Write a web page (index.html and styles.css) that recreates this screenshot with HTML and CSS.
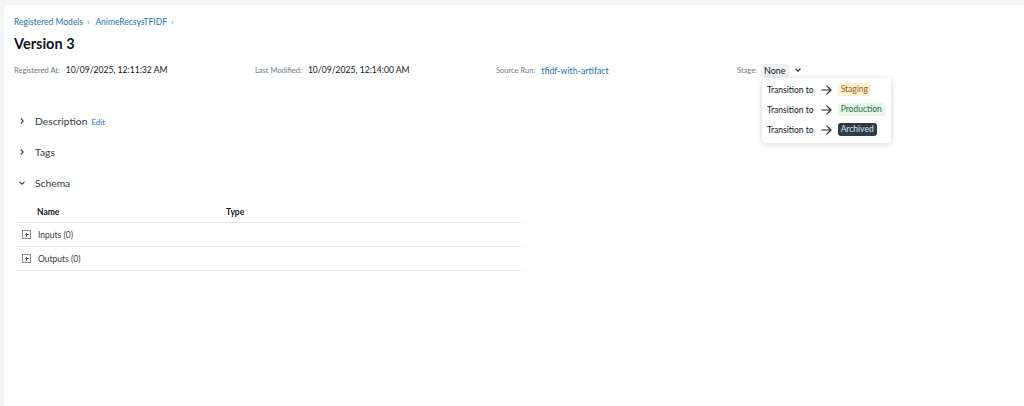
FILE: index.html
```html
<!DOCTYPE html>
<html lang="en">
<head>
  <meta charset="UTF-8" />
  <title>Version 3 - AnimeRecsysTFIDF</title>
  <link rel="stylesheet" href="styles.css">
</head>
<body>
  <div class="page">
    <nav class="breadcrumb">
      <a href="#">Registered Models</a><span class="sep">›</span>
      <a href="#">AnimeRecsysTFIDF</a><span class="sep">›</span>
    </nav>
    <h1>Version 3</h1>

    <div class="meta">
      <div class="meta-item"><span class="label">Registered At:</span><span class="value">10/09/2025, 12:11:32 AM</span></div>
      <div class="meta-item"><span class="label">Last Modified:</span><span class="value">10/09/2025, 12:14:00 AM</span></div>
      <div class="meta-item"><span class="label">Source Run:</span><a class="value link" href="#">tfidf-with-artifact</a></div>
      <div class="meta-item stage">
        <span class="label">Stage:</span>
        <span class="stage-value">None</span>
        <svg class="caret" width="8" height="8" viewBox="0 0 8 8"><path d="M1.5 2.8 L4 5.2 L6.5 2.8" fill="none" stroke="#333" stroke-width="1.2"/></svg>
        <div class="menu">
          <div class="menu-item">Transition to <svg class="arrow" width="11" height="10" viewBox="0 0 11 10"><path d="M0.5 5 H10 M5.5 0.7 L10 5 L5.5 9.3" fill="none" stroke="#222" stroke-width="1.1"/></svg><span class="badge staging">Staging</span></div>
          <div class="menu-item">Transition to <svg class="arrow" width="11" height="10" viewBox="0 0 11 10"><path d="M0.5 5 H10 M5.5 0.7 L10 5 L5.5 9.3" fill="none" stroke="#222" stroke-width="1.1"/></svg><span class="badge production">Production</span></div>
          <div class="menu-item">Transition to <svg class="arrow" width="11" height="10" viewBox="0 0 11 10"><path d="M0.5 5 H10 M5.5 0.7 L10 5 L5.5 9.3" fill="none" stroke="#222" stroke-width="1.1"/></svg><span class="badge archived">Archived</span></div>
        </div>
      </div>
    </div>

    <div class="sections">
      <div class="section">
        <svg class="chev" width="8" height="8" viewBox="0 0 8 8"><path d="M2.8 1.5 L5.2 4 L2.8 6.5" fill="none" stroke="#444" stroke-width="1.1"/></svg>
        <span class="section-title">Description</span><a class="edit" href="#">Edit</a>
      </div>
      <div class="section">
        <svg class="chev" width="8" height="8" viewBox="0 0 8 8"><path d="M2.8 1.5 L5.2 4 L2.8 6.5" fill="none" stroke="#444" stroke-width="1.1"/></svg>
        <span class="section-title">Tags</span>
      </div>
      <div class="section">
        <svg class="chev" width="8" height="8" viewBox="0 0 8 8"><path d="M1.5 2.8 L4 5.2 L6.5 2.8" fill="none" stroke="#444" stroke-width="1.1"/></svg>
        <span class="section-title">Schema</span>
      </div>

      <div class="schema">
        <div class="schema-row head"><span class="col-name">Name</span><span class="col-type">Type</span></div>
        <div class="schema-row"><span class="plus"></span>Inputs (0)</div>
        <div class="schema-row"><span class="plus"></span>Outputs (0)</div>
      </div>
    </div>
  </div>
</body>
</html>
```

FILE: styles.css
```css
body {
  margin: 0;
  padding: 5px 0 0 4px;
  background-color: #f5f6f8;
  font-family: "Segoe UI", Lato, "Liberation Sans", sans-serif;
  color: #11171c;
  height: 406px;
  box-sizing: border-box;
  overflow: hidden;
}
.page {
  background: #fff;
  border-top-left-radius: 6px;
  height: 100%;
  padding: 10px 0 0 10px;
  box-sizing: border-box;
}
a {
  color: #2272b4;
  text-decoration: none;
}
.breadcrumb {
  font-size: 8.5px;
  height: 14px;
  line-height: 14px;
}
.breadcrumb .sep {
  color: #5f7281;
  margin: 0 4px;
}
h1 {
  font-size: 14.5px;
  font-weight: 700;
  margin: 5px 0 0;
  line-height: 20px;
}
.meta {
  display: grid;
  grid-template-columns: repeat(4, 241px);
  margin-top: 8px;
  height: 16px;
  align-items: center;
}
.meta-item {
  display: flex;
  align-items: center;
  white-space: nowrap;
}
.label {
  font-size: 7.5px;
  color: #6f7a85;
  margin-right: 6px;
}
.value {
  font-size: 8.6px;
  color: #11171c;
}
.value.link {
  color: #2272b4;
  font-size: 8.8px;
}
.stage {
  position: relative;
}
.stage .label {
  margin-right: 4px;
}
.stage-value {
  font-size: 9px;
  background: #eef0f2;
  border-radius: 2px;
  padding: 1px 3px;
}
.caret {
  margin-left: 5px;
}
.menu {
  position: absolute;
  top: 14px;
  left: 25px;
  width: 129px;
  padding: 2px 0 3px;
  background: #fff;
  border-radius: 3px;
  box-shadow: 0 1px 6px rgba(0, 0, 0, 0.18);
  z-index: 10;
}
.menu-item {
  display: flex;
  align-items: center;
  height: 20px;
  padding-left: 5px;
  font-size: 8.5px;
  color: #11171c;
}
.arrow {
  margin: 0 6px 0 7px;
}
.badge {
  font-size: 8.5px;
  padding: 1px 3px;
  border-radius: 3px;
  line-height: 11px;
}
.staging {
  background: #fcefd2;
  color: #8a6227;
}
.production {
  background: #e6f6e8;
  color: #2b6b3d;
}
.archived {
  background: #2f3b44;
  color: #dde6ee;
}
.sections {
  margin-top: 27px;
}
.section {
  display: flex;
  align-items: center;
  height: 31px;
  padding-left: 4px;
}
.chev {
  margin-right: 9px;
}
.section-title {
  font-size: 10.3px;
  color: #333a40;
}
.edit {
  font-size: 8px;
  margin-left: 4px;
  margin-top: 2px;
}
.schema {
  width: 508px;
  margin-left: 1px;
}
.schema-row {
  display: flex;
  align-items: center;
  height: 23px;
  border-bottom: 1px solid #e8eaed;
  font-size: 8.5px;
  color: #333a40;
  padding-left: 7px;
}
.schema-row.head {
  height: 25px;
  padding: 3px 0 0 22px;
  box-sizing: border-box;
  font-weight: 700;
  color: #11171c;
}
.col-name {
  width: 189px;
}
.plus {
  width: 7px;
  height: 7px;
  border: 1px solid #8a9097;
  margin-right: 7px;
  position: relative;
}
.plus::before,
.plus::after {
  content: "";
  position: absolute;
  background: #555;
  left: 1.5px;
  top: 3px;
  width: 4px;
  height: 1px;
}
.plus::after {
  left: 3px;
  top: 1.5px;
  width: 1px;
  height: 4px;
}
```
